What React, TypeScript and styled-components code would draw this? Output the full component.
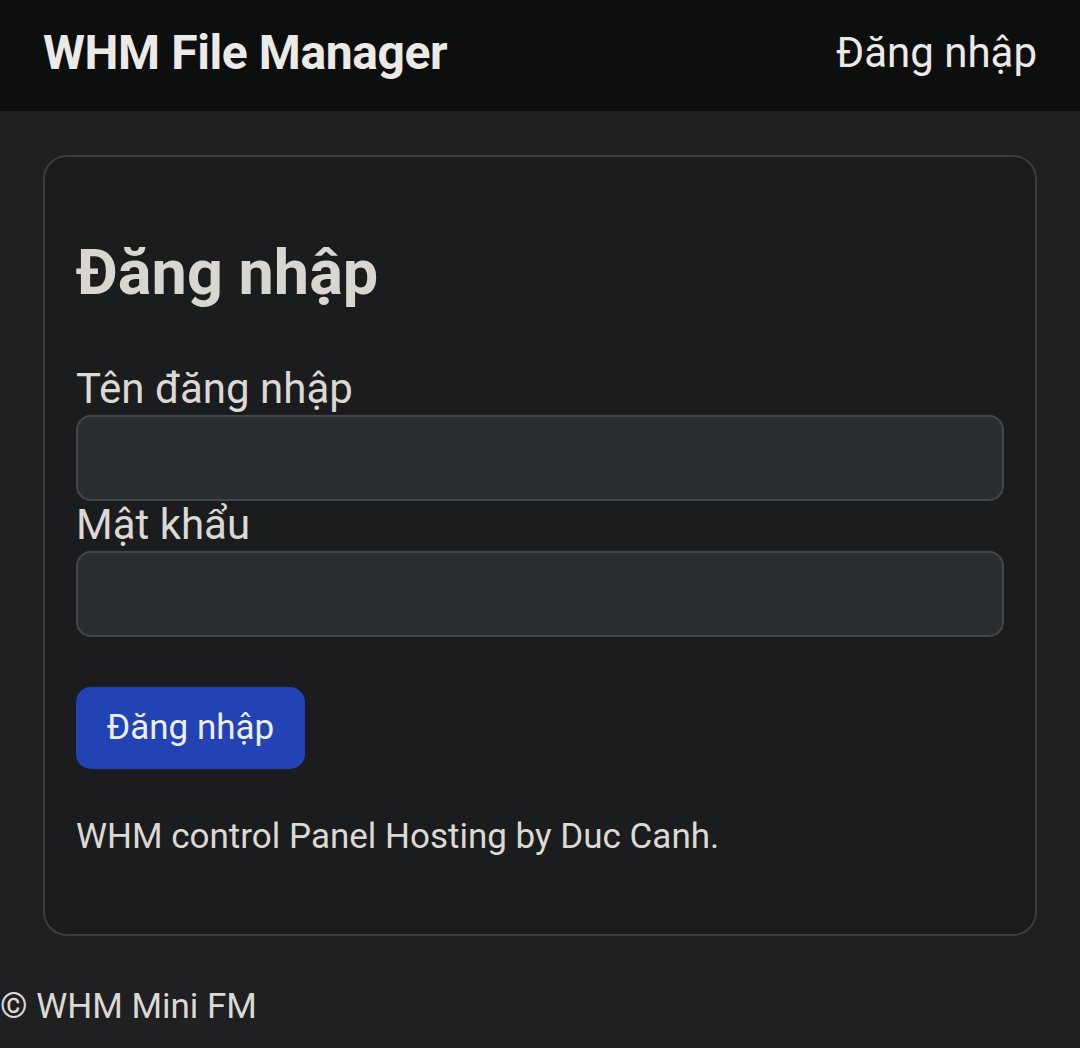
import styled, { createGlobalStyle } from "styled-components";

const GlobalStyle = createGlobalStyle`
  html, body {
    margin: 0;
    padding: 0;
    background: #1f2022;
    font-family: Roboto, "Liberation Sans", sans-serif;
    color: #dcd9d4;
  }
  * {
    box-sizing: border-box;
  }
`;

export default function App() {
  return (
    <>
      <GlobalStyle />
      <TopBar>
        <Brand>WHM File Manager</Brand>
        <NavLink href="#">Đăng nhập</NavLink>
      </TopBar>
      <Main>
        <Card>
          <Heading>Đăng nhập</Heading>
          <Form onSubmit={(e) => e.preventDefault()}>
            <Label htmlFor="username">Tên đăng nhập</Label>
            <Input id="username" type="text" />
            <Label htmlFor="password">Mật khẩu</Label>
            <Input id="password" type="password" />
            <SubmitButton type="submit">Đăng nhập</SubmitButton>
          </Form>
          <Note>WHM control Panel Hosting by Duc Canh.</Note>
        </Card>
      </Main>
      <Footer>© WHM Mini FM</Footer>
    </>
  );
}

const TopBar = styled.header`
  height: 111px;
  padding: 0 43px 6px;
  display: flex;
  align-items: center;
  justify-content: space-between;
  background: #0d0e0e;
`;

const Brand = styled.div`
  font-size: 48px;
  font-weight: 700;
  color: #eceae6;
  letter-spacing: -0.4px;
`;

const NavLink = styled.a`
  font-size: 42px;
  color: #eceae6;
  text-decoration: none;
`;

const Main = styled.main`
  padding: 44px 43px 44px;
`;

const Card = styled.section`
  background: #1b1c1e;
  border: 2px solid #3a3c3f;
  border-radius: 24px;
  padding: 78px 31px 73px;
`;

const Heading = styled.h2`
  margin: 0 0 54px;
  font-size: 63px;
  font-weight: 700;
  line-height: 1.2;
  color: #d9d6d1;
`;

const Form = styled.form`
  display: flex;
  flex-direction: column;
  align-items: flex-start;
`;

const Label = styled.label`
  font-size: 42px;
  line-height: 48px;
  color: #dcd9d4;
  margin-bottom: 2px;
`;

const Input = styled.input`
  width: 100%;
  height: 86px;
  background: #2b2e31;
  border: 2px solid #43464a;
  border-radius: 15px;
  color: #dcd9d4;
  font-size: 40px;
  padding: 0 24px;
  outline: none;
`;

const SubmitButton = styled.button`
  margin-top: 50px;
  width: 229px;
  height: 82px;
  border: none;
  border-radius: 15px;
  background: #2143b3;
  color: #eceef5;
  font-family: Roboto, "Liberation Sans", sans-serif;
  font-size: 35px;
  cursor: pointer;
`;

const Note = styled.p`
  margin: 44px 0 0;
  font-size: 35px;
  line-height: 48px;
  color: #dcd9d4;
`;

const Footer = styled.footer`
  font-size: 35px;
  line-height: 54px;
  color: #dcd9d4;
`;
